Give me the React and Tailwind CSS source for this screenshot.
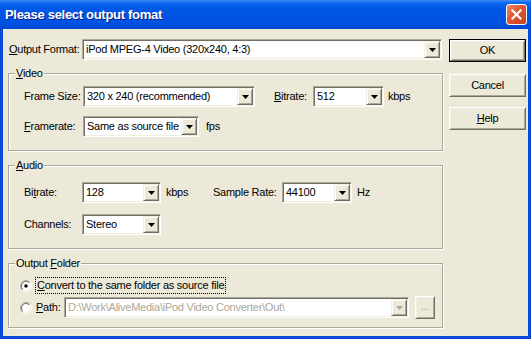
import React, { useId } from "react";

const FACE = "bg-[#ECE9D8]";

function Arrow({ disabled }) {
  return (
    <svg width="7" height="4" viewBox="0 0 7 4">
      <path d="M0 0H7L3.5 4Z" fill={disabled ? "#ACA899" : "#000"} />
    </svg>
  );
}

function DropBtn({ disabled }) {
  return (
    <div className="w-[16px] h-full shrink-0 flex items-center justify-center bg-[#ECE9D8] border border-t-[#F1EFE2] border-l-[#F1EFE2] border-b-[#716F64] border-r-[#716F64] shadow-[inset_1px_1px_0_#fff,inset_-1px_-1px_0_#ACA899]">
      <Arrow disabled={disabled} />
    </div>
  );
}

function Combo({ w, value, disabled }) {
  return (
    <div
      className={`flex h-[21px] ${w} shrink-0 bg-white border border-t-[#ACA899] border-l-[#ACA899] border-b-white border-r-white shadow-[inset_1px_1px_0_#716F64,inset_-1px_-1px_0_#F1EFE2] p-[1px]`}
    >
      <div
        className={`flex-1 flex items-center pl-[2px] overflow-hidden ${
          disabled ? "text-[#ACA899]" : "text-black"
        }`}
      >
        {value}
      </div>
      <DropBtn disabled={disabled} />
    </div>
  );
}

function Btn({ children, def, className = "" }) {
  const inner = (
    <div className="w-full h-full flex items-center justify-center bg-[#ECE9D8] border border-t-white border-l-white border-b-[#716F64] border-r-[#716F64] shadow-[inset_1px_1px_0_#F1EFE2,inset_-1px_-1px_0_#ACA899]">
      {children}
    </div>
  );
  if (def) {
    return <div className={`border border-black ${className}`}>{inner}</div>;
  }
  return <div className={className}>{inner}</div>;
}

function Group({ label, className = "", children }) {
  return (
    <div
      className={`relative w-[435px] border border-[#ACA899] shadow-[inset_1px_1px_0_#fff,1px_1px_0_#fff] ${className}`}
    >
      <span className="absolute -top-[8px] left-[6px] px-[1px] bg-[#ECE9D8] leading-[14px]">
        {label}
      </span>
      {children}
    </div>
  );
}

function Radio({ checked }) {
  const id = useId().replace(/:/g, "");
  return (
    <svg width="12" height="12" viewBox="0 0 12 12" className="shrink-0">
      <defs>
        <linearGradient id={`o${id}`} x1="0" y1="0" x2="1" y2="1">
          <stop offset="0.5" stopColor="#ACA899" />
          <stop offset="0.5" stopColor="#FFFFFF" />
        </linearGradient>
        <linearGradient id={`i${id}`} x1="0" y1="0" x2="1" y2="1">
          <stop offset="0.5" stopColor="#716F64" />
          <stop offset="0.5" stopColor="#F1EFE2" />
        </linearGradient>
      </defs>
      <circle cx="6" cy="6" r="5.5" fill="none" stroke={`url(#o${id})`} />
      <circle cx="6" cy="6" r="4.5" fill="#fff" stroke={`url(#i${id})`} />
      {checked && <circle cx="6" cy="6" r="1.8" fill="#000" />}
    </svg>
  );
}

function CloseBtn() {
  return (
    <div className="w-[21px] h-[21px] rounded-[3px] border border-white bg-[linear-gradient(135deg,#F08A6A_0%,#E0552E_45%,#C8431F_100%)] flex items-center justify-center">
      <svg width="11" height="11" viewBox="0 0 11 11">
        <path d="M1.5 1.5L9.5 9.5M9.5 1.5L1.5 9.5" stroke="#fff" strokeWidth="2.2" strokeLinecap="square" />
      </svg>
    </div>
  );
}

export default function App() {
  return (
    <div className="w-[531px] h-[339px] flex flex-col bg-[#0848DA] font-['Liberation_Sans',Arial,sans-serif] text-[11px] tracking-[-0.25px] whitespace-nowrap text-black overflow-hidden">
      {/* Title bar */}
      <div className="h-[29px] shrink-0 flex items-center justify-between pl-[5px] pr-[4px] bg-[linear-gradient(to_bottom,#3D8BF2_0px,#0A66EE_3px,#0058E6_8px,#0054E3_18px,#0050DD_25px,#0044D0_29px)]">
        <span className="text-white font-bold text-[13px] tracking-[-0.3px] [text-shadow:1px_1px_0_#0A1E8C] pt-[1px]">
          Please select output fomat
        </span>
        <CloseBtn />
      </div>

      {/* Client area */}
      <div className={`flex-1 mx-[3px] mb-[3px] ${FACE} flex`}>
        {/* Left column */}
        <div className="w-[446px] shrink-0 pl-[5px] pt-[10px] flex flex-col">
          <div className="flex items-center h-[21px] pl-[1px]">
            <span className="w-[73px] shrink-0">
              <u>O</u>utput Format:
            </span>
            <Combo w="w-[360px]" value="iPod MPEG-4 Video (320x240, 4:3)" />
          </div>

          <Group label={<><u>V</u>ideo</>} className="mt-[13px] h-[78px] pl-[15px] pt-[12px]">
            <div className="flex flex-col gap-[9px]">
              <div className="flex items-center h-[21px]">
                <span className="w-[59px] shrink-0">Frame Size:</span>
                <Combo w="w-[172px]" value="320 x 240 (recommended)" />
                <span className="ml-[19px] w-[39px] shrink-0">
                  <u>B</u>itrate:
                </span>
                <Combo w="w-[71px]" value="512" />
                <span className="ml-[4px]">kbps</span>
              </div>
              <div className="flex items-center h-[21px]">
                <span className="w-[59px] shrink-0">
                  <u>F</u>ramerate:
                </span>
                <Combo w="w-[116px]" value="Same as source file" />
                <span className="ml-[7px]">fps</span>
              </div>
            </div>
          </Group>

          <Group label={<><u>A</u>udio</>} className="mt-[14px] h-[84px] pl-[15px] pt-[16px]">
            <div className="flex flex-col gap-[11px]">
              <div className="flex items-center h-[21px]">
                <span className="w-[58px] shrink-0">
                  Bi<u>t</u>rate:
                </span>
                <Combo w="w-[79px]" value="128" />
                <span className="ml-[5px] w-[47px] shrink-0">kbps</span>
                <span className="w-[69px] shrink-0">Sample Rate:</span>
                <Combo w="w-[70px]" value="44100" />
                <span className="ml-[5px]">Hz</span>
              </div>
              <div className="flex items-center h-[21px]">
                <span className="w-[58px] shrink-0">Channels:</span>
                <Combo w="w-[79px]" value="Stereo" />
              </div>
            </div>
          </Group>

          <Group
            label={<>Output <u>F</u>older</>}
            className="mt-[14px] h-[65px] pl-[11px] pt-[13px]"
          >
            <div className="flex flex-col gap-[2px]">
              <div className="flex items-center h-[17px]">
                <Radio checked />
                <span className="ml-[3px] h-[17px] flex items-center px-[1px] border border-dotted border-black leading-none">
                  <span>
                    <u>C</u>onvert to the same folder as source file
                  </span>
                </span>
              </div>
              <div className="flex items-center h-[23px]">
                <Radio />
                <span className="ml-[4px] w-[28px] shrink-0">
                  <u>P</u>ath:
                </span>
                <Combo
                  w="w-[345px]"
                  value={"D:\\Work\\AliveMedia\\iPod Video Converter\\Out\\"}
                  disabled
                />
                <Btn className="ml-[6px] w-[20px] h-[23px] shrink-0">
                  <span className="text-[#ACA899] leading-none pb-[2px]">...</span>
                </Btn>
              </div>
            </div>
          </Group>
        </div>

        {/* Right column: buttons */}
        <div className="flex-1 pt-[10px] flex flex-col">
          <Btn def className="w-[77px] h-[23px]">OK</Btn>
          <Btn className="mt-[12px] w-[77px] h-[23px]">Cancel</Btn>
          <Btn className="mt-[10px] w-[77px] h-[23px]">
            <span>
              <u>H</u>elp
            </span>
          </Btn>
        </div>
      </div>
    </div>
  );
}
